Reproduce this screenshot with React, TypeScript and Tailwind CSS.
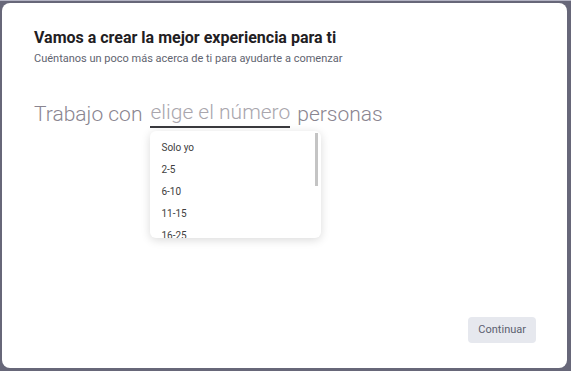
import React from 'react';

const options = ['Solo yo', '2-5', '6-10', '11-15', '16-25'];

export default function App() {
  return (
    <div className="w-[571px] h-[371px] bg-[#676779] pl-[2px] pt-[2px] pr-[4px] pb-[3px] font-['Roboto',sans-serif] border-t border-[#b4b4c4]">
      <div className="relative h-full w-full bg-white rounded-lg flex flex-col pl-8 pr-[31px] pt-[25px] pb-[25px]">
        {/* Header */}
        <h1 className="text-[16px] font-bold text-[#1f2023] leading-5">
          Vamos a crear la mejor experiencia para ti
        </h1>
        <p className="text-[11px] text-[#5f6470] mt-[3px] leading-4">
          Cuéntanos un poco más acerca de ti para ayudarte a comenzar
        </p>

        {/* Sentence with select */}
        <div className="mt-[31px] flex items-end text-[21px] font-light text-[#8a8590] leading-7">
          <span>Trabajo con</span>
          <div className="relative ml-[8px] mr-[7px]">
            <span className="block text-[#a9a6ad] border-b-2 border-[#3a3a3e] pb-0">
              elige el número
            </span>
            {/* Dropdown */}
            <div className="absolute left-0 top-[33px] w-[171px] h-[107px] bg-white rounded-md shadow-[0_2px_10px_rgba(0,0,0,0.15)] overflow-hidden">
              <div className="flex flex-col pt-[6px] pl-[11px] text-[10px] leading-[22px] text-[#404040] font-normal">
                {options.map((o) => (
                  <div key={o}>{o}</div>
                ))}
              </div>
              <div className="absolute right-[3px] top-[2px] w-[3px] h-[53px] bg-[#c4c4c4]" />
            </div>
          </div>
          <span>personas</span>
        </div>

        {/* Footer */}
        <div className="mt-auto flex justify-end">
          <button className="h-[26px] px-[10px] rounded bg-[#e6e8ee] text-[11px] text-[#5b6170]">
            Continuar
          </button>
        </div>
      </div>
    </div>
  );
}
